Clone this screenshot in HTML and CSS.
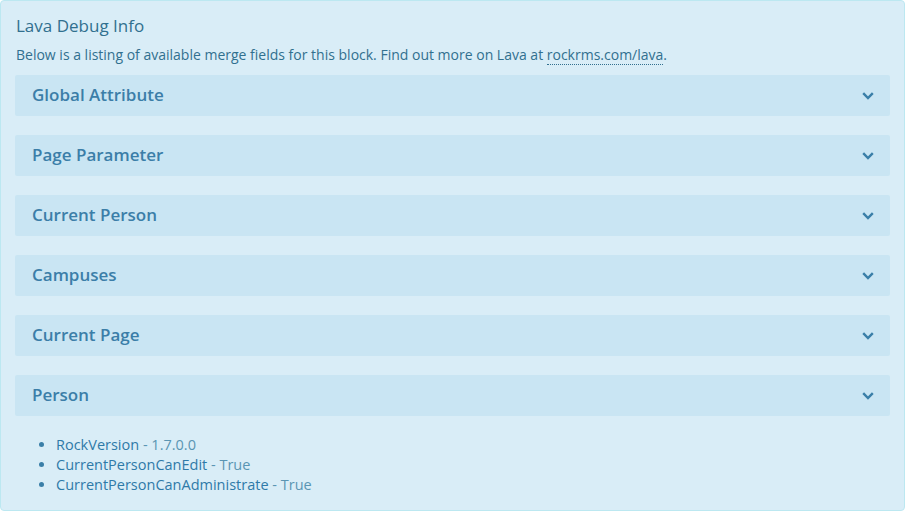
FILE: index.html
```html
<!DOCTYPE html>
<html>
<head>
<meta charset="utf-8">
<link rel="stylesheet" href="styles.css">
</head>
<body>
<div class="debug">
  <h3 class="title">Lava Debug Info</h3>
  <p class="desc">Below is a listing of available merge fields for this block. Find out more on Lava at <a class="link" href="#">rockrms.com/lava</a>.</p>
  <div class="panels">
    <div class="panel"><span class="panel-title">Global Attribute</span><svg class="chev" viewBox="0 0 12 8" width="12" height="8"><path d="M1.2 1.2 L6 6 L10.8 1.2" fill="none" stroke="currentColor" stroke-width="2.4"/></svg></div>
    <div class="panel"><span class="panel-title">Page Parameter</span><svg class="chev" viewBox="0 0 12 8" width="12" height="8"><path d="M1.2 1.2 L6 6 L10.8 1.2" fill="none" stroke="currentColor" stroke-width="2.4"/></svg></div>
    <div class="panel"><span class="panel-title">Current Person</span><svg class="chev" viewBox="0 0 12 8" width="12" height="8"><path d="M1.2 1.2 L6 6 L10.8 1.2" fill="none" stroke="currentColor" stroke-width="2.4"/></svg></div>
    <div class="panel"><span class="panel-title">Campuses</span><svg class="chev" viewBox="0 0 12 8" width="12" height="8"><path d="M1.2 1.2 L6 6 L10.8 1.2" fill="none" stroke="currentColor" stroke-width="2.4"/></svg></div>
    <div class="panel"><span class="panel-title">Current Page</span><svg class="chev" viewBox="0 0 12 8" width="12" height="8"><path d="M1.2 1.2 L6 6 L10.8 1.2" fill="none" stroke="currentColor" stroke-width="2.4"/></svg></div>
    <div class="panel"><span class="panel-title">Person</span><svg class="chev" viewBox="0 0 12 8" width="12" height="8"><path d="M1.2 1.2 L6 6 L10.8 1.2" fill="none" stroke="currentColor" stroke-width="2.4"/></svg></div>
  </div>
  <ul class="fields">
    <li><span class="key">RockVersion</span><span class="val"> - 1.7.0.0</span></li>
    <li><span class="key">CurrentPersonCanEdit</span><span class="val"> - True</span></li>
    <li><span class="key">CurrentPersonCanAdministrate</span><span class="val"> - True</span></li>
  </ul>
</div>
</body>
</html>
```

FILE: styles.css
```css
html, body {
  margin: 0;
  padding: 0;
  background: #ffffff;
}
body {
  font-family: "Open Sans", "Liberation Sans", sans-serif;
  color: #31708f;
}
.debug {
  box-sizing: border-box;
  width: 905px;
  height: 511px;
  background: #d9edf7;
  border: 1px solid #bce8f1;
  border-radius: 4px;
  padding: 13px 14px 15px 14px;
}
.title {
  margin: 0;
  font-size: 17px;
  font-weight: 400;
  line-height: 24px;
  padding-left: 1px;
}
.desc {
  margin: 6px 0 9px 1px;
  font-size: 14px;
  line-height: 22px;
}
.link {
  color: #31708f;
  text-decoration: none;
  border-bottom: 1px dotted #31708f;
}
.panels {
  display: flex;
  flex-direction: column;
  gap: 19px;
}
.panel {
  height: 41px;
  background: #c9e5f3;
  border-radius: 2px;
  display: flex;
  align-items: center;
  justify-content: space-between;
  padding: 0 16px 2px 17px;
  box-sizing: border-box;
}
.panel-title {
  font-size: 17px;
  font-weight: 600;
  color: #3b7ea8;
}
.chev {
  color: #3a7fa8;
  margin-top: 2px;
}
.fields {
  margin: 19px 0 0 0;
  padding-left: 41px;
  font-size: 14.5px;
  line-height: 20px;
}
.fields li {
  color: #3a7fa8;
}
.key {
  color: #2f7aa8;
}
.val {
  color: #5a95b3;
}
```
